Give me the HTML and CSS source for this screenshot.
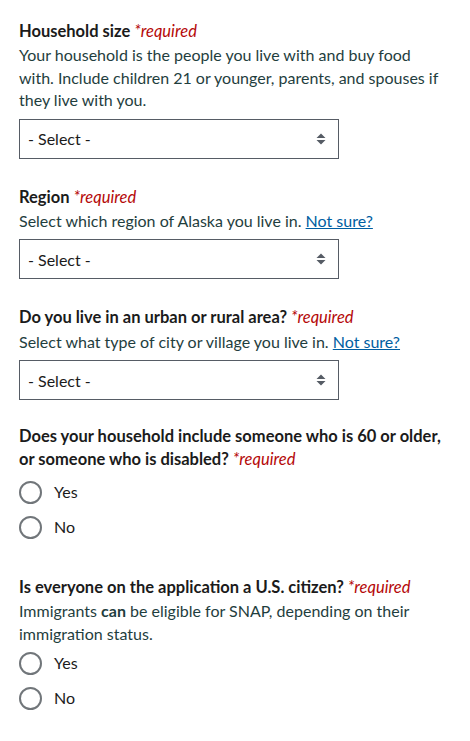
FILE: index.html
```html
<!DOCTYPE html>
<html lang="en">
<head>
<meta charset="utf-8">
<title>SNAP form</title>
<link rel="stylesheet" href="styles.css">
</head>
<body>
<form class="form">
  <div class="group group-first">
    <label class="label" for="hh">Household size <span class="req">*required</span></label>
    <p class="hint">Your household is the people you live with and buy food with. Include children 21 or younger, parents, and spouses if they live with you.</p>
    <div class="select-wrap">
      <select class="select" id="hh"><option>- Select -</option></select>
      <svg class="select-icon" width="10" height="12" viewBox="0 0 10 12"><path d="M5 0.5 L9.5 5 H0.5 Z M5 11.5 L9.5 7 H0.5 Z" fill="#565c65"/></svg>
    </div>
  </div>

  <div class="group">
    <label class="label" for="region">Region <span class="req">*required</span></label>
    <p class="hint">Select which region of Alaska you live in. <a href="#" class="link">Not sure?</a></p>
    <div class="select-wrap">
      <select class="select" id="region"><option>- Select -</option></select>
      <svg class="select-icon" width="10" height="12" viewBox="0 0 10 12"><path d="M5 0.5 L9.5 5 H0.5 Z M5 11.5 L9.5 7 H0.5 Z" fill="#565c65"/></svg>
    </div>
  </div>

  <div class="group">
    <label class="label" for="area">Do you live in an urban or rural area? <span class="req">*required</span></label>
    <p class="hint">Select what type of city or village you live in. <a href="#" class="link">Not sure?</a></p>
    <div class="select-wrap">
      <select class="select" id="area"><option>- Select -</option></select>
      <svg class="select-icon" width="10" height="12" viewBox="0 0 10 12"><path d="M5 0.5 L9.5 5 H0.5 Z M5 11.5 L9.5 7 H0.5 Z" fill="#565c65"/></svg>
    </div>
  </div>

  <fieldset class="group fieldset">
    <legend class="label legend">Does your household include someone who is 60 or older, or someone who is disabled? <span class="req">*required</span></legend>
    <div class="radios radios-a">
      <label class="radio"><input type="radio" name="elder" class="radio-input"><span>Yes</span></label>
      <label class="radio"><input type="radio" name="elder" class="radio-input"><span>No</span></label>
    </div>
  </fieldset>

  <fieldset class="group fieldset group-last">
    <legend class="label legend">Is everyone on the application a U.S. citizen? <span class="req">*required</span></legend>
    <p class="hint">Immigrants <strong>can</strong> be eligible for SNAP, depending on their immigration status.</p>
    <div class="radios radios-b">
      <label class="radio"><input type="radio" name="citizen" class="radio-input"><span>Yes</span></label>
      <label class="radio"><input type="radio" name="citizen" class="radio-input"><span>No</span></label>
    </div>
  </fieldset>
</form>
</body>
</html>
```

FILE: styles.css
```css
* { box-sizing: border-box; }
html, body { margin: 0; padding: 0; background: #fff; }
body {
  font-family: "Lato", "Liberation Sans", sans-serif;
  font-size: 16px;
  line-height: 22.4px;
  color: #1b1b1b;
}
.form { padding: 20px 25px 0 19px; width: 100%; }
.group { margin: 27px 0 0 0; }
.group-first { margin-top: 0; }
.fieldset { border: 0; padding: 0; min-width: 0; }
.fieldset.group { margin-top: 25px; }
.group-last.group { margin-top: 31px; }
.label { display: block; font-weight: 700; font-size: 16.5px; color: #1b1b1b; }
.legend { padding: 0; }
.req { font-weight: 400; font-style: italic; color: #b50909; }
.hint { margin: 2px 0 0 0; color: #1f3e3e; }
.hint strong { font-weight: 700; }
.link { color: #005ea2; text-decoration: underline; }
.select-wrap { position: relative; width: 320px; margin-top: 7px; }
.select {
  appearance: none;
  -webkit-appearance: none;
  display: block;
  width: 320px;
  height: 40px;
  border: 1px solid #565c65;
  border-radius: 0;
  background: #fff;
  padding: 0 8px;
  font-family: inherit;
  font-size: 16px;
  color: #1b1b1b;
}
.select-icon { position: absolute; right: 13px; top: 14px; }
.radios { display: flex; flex-direction: column; }
.radios-a { margin-top: 5px; }
.radios-b { margin-top: 0.5px; }
.radio { display: flex; align-items: center; height: 35px; color: #1b1b1b; }
.radio-input {
  appearance: none;
  -webkit-appearance: none;
  margin: 0 12px 0 0;
  width: 23px;
  height: 23px;
  border: 2px solid #71767a;
  border-radius: 50%;
  background: #fff;
  flex: none;
}
```
